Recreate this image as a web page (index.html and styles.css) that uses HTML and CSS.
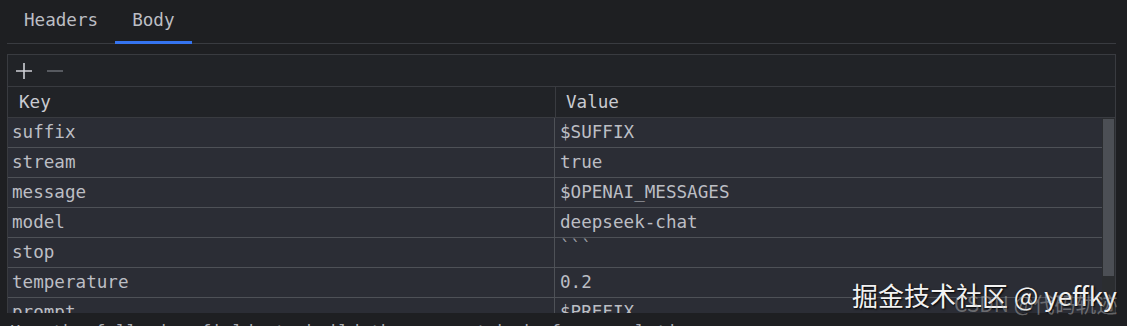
FILE: index.html
```html
<!DOCTYPE html>
<html lang="en">

<head>
    <meta charset="UTF-8">
    <title>Body</title>
    <link rel="stylesheet" href="styles.css">
</head>

<body>
    <div class="tabs">
        <div class="tab">Headers</div>
        <div class="tab active">Body</div>
    </div>
    <div class="panel">
        <div class="toolbar">
            <svg class="tool" width="18" height="18" viewBox="0 0 18 18">
                <path d="M9 1v16M1 9h16" stroke="#ced0d6" stroke-width="1.6" fill="none" />
            </svg>
            <svg class="tool" width="18" height="18" viewBox="0 0 18 18">
                <path d="M1 9h16" stroke="#6f737a" stroke-width="1.4" fill="none" />
            </svg>
        </div>
        <div class="head">
            <div class="hcell key">Key</div>
            <div class="hcell val">Value</div>
        </div>
        <div class="body">
            <div class="rows">
                <div class="row"><div class="cell key">suffix</div><div class="cell val">$SUFFIX</div></div>
                <div class="row"><div class="cell key">stream</div><div class="cell val">true</div></div>
                <div class="row"><div class="cell key">message</div><div class="cell val">$OPENAI_MESSAGES</div></div>
                <div class="row"><div class="cell key">model</div><div class="cell val">deepseek-chat</div></div>
                <div class="row"><div class="cell key">stop</div><div class="cell val tick">```</div></div>
                <div class="row"><div class="cell key">temperature</div><div class="cell val">0.2</div></div>
                <div class="row"><div class="cell key">prompt</div><div class="cell val">$PREFIX</div></div>
            </div>
            <div class="scroll">
                <div class="thumb"></div>
            </div>
        </div>
    </div>
    <div class="footer">
        <div class="note">Use the following fields to build the request body for completion</div>
    </div>
    <div class="mark">
        <span class="mark-a">掘金技术社区 @ yeffky</span>
        <span class="mark-b">CSDN @代码轨迹</span>
    </div>
</body>

</html>
```

FILE: styles.css
```css
* {
    margin: 0;
    padding: 0;
    box-sizing: border-box;
}

body {
    width: 1127px;
    height: 326px;
    overflow: hidden;
    background-color: #1e1f22;
    color: #bcbec4;
    font-family: "DejaVu Sans Mono", "Liberation Mono", monospace;
    font-size: 17.6px;
    position: relative;
}

.tabs {
    display: flex;
    height: 44px;
    margin: 0 11px 0 7px;
    border-bottom: 1px solid #393b40;
}

.tab {
    padding: 0 17px;
    line-height: 40px;
    color: #bcbec4;
}

.tab.active {
    border-bottom: 3px solid #3574f0;
    margin-bottom: -1px;
}

.panel {
    margin: 10px 11px 0 7px;
    height: 259px;
    border: 1px solid #393b40;
    border-bottom: none;
    background-color: #212327;
    display: flex;
    flex-direction: column;
}

.toolbar {
    height: 32px;
    flex-shrink: 0;
    display: flex;
    align-items: center;
    gap: 13px;
    padding-left: 7px;
    border-bottom: 1px solid #393b40;
}

.head {
    display: flex;
    height: 31px;
    flex-shrink: 0;
    border-bottom: 1px solid #393b40;
    color: #c9cbd1;
}

.hcell {
    line-height: 30px;
}

.hcell.key {
    width: 548px;
    padding-left: 11px;
    border-right: 1px solid #393b40;
}

.hcell.val {
    padding-left: 10px;
}

.body {
    flex: 1;
    display: flex;
    overflow: hidden;
}

.rows {
    flex: 1;
    background-color: #2b2d35;
}

.row {
    display: flex;
    height: 30px;
    border-bottom: 1px solid #4e5157;
}

.cell {
    line-height: 29px;
    white-space: nowrap;
}

.cell.key {
    width: 547px;
    padding-left: 4px;
    border-right: 1px solid #4e5157;
}

.cell.val {
    padding-left: 5px;
}

.cell.tick {
    line-height: 18px;
    color: #9a9ca2;
}

.scroll {
    width: 13px;
    background-color: #2b2d30;
    padding: 1px 1px 0 1px;
}

.thumb {
    height: 157px;
    background-color: #4c4f55;
}

.footer {
    height: 13px;
    overflow: hidden;
}

.note {
    padding: 9px 0 0 10px;
    color: #a8aab0;
    white-space: nowrap;
}

.mark {
    position: absolute;
    left: 852px;
    top: 276px;
    width: 275px;
    height: 46px;
}

.mark-a {
    position: absolute;
    left: 0;
    top: 0;
    font-family: "Noto Sans CJK SC", "Noto Sans", sans-serif;
    font-size: 26px;
    color: #f2f2f2;
    text-shadow: 1px 1px 2px #000;
    white-space: nowrap;
}

.mark-b {
    position: absolute;
    left: 102px;
    top: 12px;
    font-family: "Noto Sans CJK SC", "Noto Sans", sans-serif;
    font-size: 21px;
    color: rgba(190, 190, 190, 0.45);
    white-space: nowrap;
}
```
